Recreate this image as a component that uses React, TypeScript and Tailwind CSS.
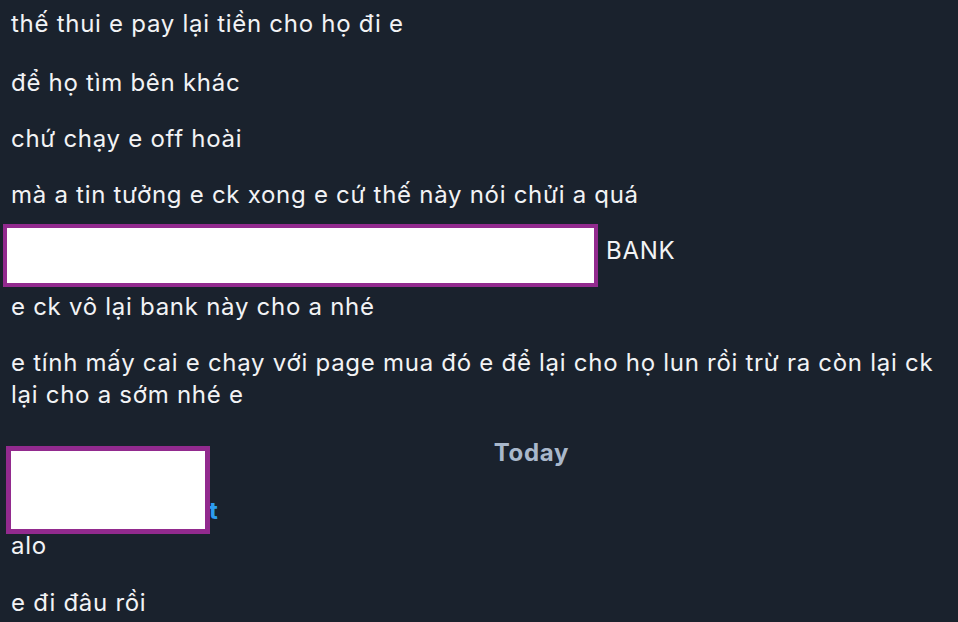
const Redact = ({ className }: { className: string }) => (
  <div className={`absolute bg-white border-[#922a8e] ${className}`} />
);

const messages = [
  'thế thui e pay lại tiền cho họ đi e',
  'để họ tìm bên khác',
  'chứ chạy e off hoài',
  'mà a tin tưởng e ck xong e cứ thế này nói chửi a quá',
];

const App = () => {
  return (
    <div
      className="w-[958px] h-[622px] overflow-hidden bg-[#1a222d] text-[#f2f3f5] text-[24px] leading-[32px] tracking-[0.03em]"
      style={{ fontFamily: 'Inter, "Noto Sans", sans-serif' }}
    >
      <div className="pl-[11px] pr-4 pt-[8px] flex flex-col">
        {messages.map((m, i) => (
          <div key={m} className={i === 0 ? 'mb-[27px]' : 'mb-[24px]'}>
            {m}
          </div>
        ))}

        {/* account number line, covered */}
        <div className="relative mb-[24px]">
          <span className="pl-[572px]">3 BANK</span>
          <Redact className="left-[-8px] top-[-11px] w-[595px] h-[63px] border-[4px]" />
        </div>

        <div className="mb-[24px]">e ck vô lại bank này cho a nhé</div>

        <div className="mb-[26px]">
          e tính mấy cai e chạy với page mua đó e để lại cho họ lun rồi trừ ra còn lại ck lại cho a sớm nhé e
        </div>

        <div className="mb-[26px] text-center pl-[110px] font-bold text-[#a9b8cb]">Today</div>

        {/* sender name, covered */}
        <div className="relative mb-[3px]">
          <span className="pl-[198px] font-bold text-[#2d9df0]">t</span>
          <Redact className="left-[-5px] top-[-49px] w-[204px] h-[88px] border-[5px]" />
        </div>

        <div className="mb-[25px]">alo</div>
        <div>e đi đâu rồi</div>
      </div>
    </div>
  );
};

export default App;
